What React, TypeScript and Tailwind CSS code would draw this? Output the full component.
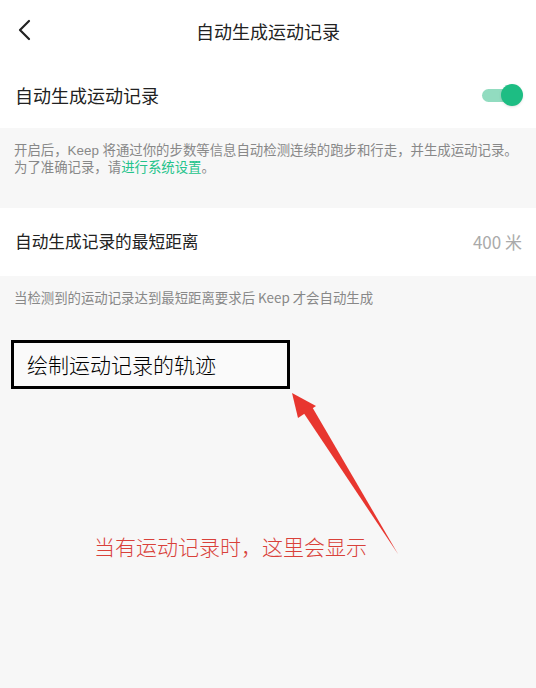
export default function App() {
  return (
    <main
      className="flex h-[688px] w-[536px] flex-col overflow-hidden bg-[#f7f7f7]"
      style={{ fontFamily: '"Noto Sans CJK SC", "Noto Sans", sans-serif' }}
    >
      {/* Header */}
      <header className="relative flex h-[62px] items-center justify-center bg-white">
        <svg
          className="absolute left-[17px] top-[19px]"
          width="16"
          height="22"
          viewBox="0 0 16 22"
          fill="none"
          stroke="#222"
          strokeWidth="2.2"
          strokeLinecap="round"
          strokeLinejoin="round"
        >
          <path d="M12 2 L3 11 L12 20" />
        </svg>
        <h1 className="text-[18px] text-[#222]">自动生成运动记录</h1>
      </header>

      {/* Toggle row */}
      <div className="flex h-[66px] items-center justify-between bg-white pl-[15px] pr-[13px]">
        <span className="text-[18px] text-[#222]">自动生成运动记录</span>
        <div className="relative h-[22px] w-[42px]">
          <div className="absolute left-[1px] top-[5px] h-[13px] w-[34px] rounded-full bg-[#92dcc0]" />
          <div className="absolute right-0 top-0 h-[22px] w-[22px] rounded-full bg-[#1dbd83] shadow-sm" />
        </div>
      </div>

      {/* Description */}
      <div
        className="px-[14px] pb-[32px] pt-[14px] text-[13.4px] leading-[17px] text-[#888]"
        style={{ fontFamily: '"Liberation Sans", "Noto Sans CJK SC", sans-serif' }}
      >
        <p className="whitespace-nowrap">开启后，Keep 将通过你的步数等信息自动检测连续的跑步和行走，并生成运动记录。</p>
        <p>
          为了准确记录，请<span className="text-[#24c38b]">进行系统设置</span>。
        </p>
      </div>

      {/* Distance row */}
      <div className="flex h-[68px] items-center justify-between bg-white pl-[15px] pr-[14px]">
        <span className="text-[16.7px] text-[#222]">自动生成记录的最短距离</span>
        <span className="text-[17px] text-[#aaa]">400 米</span>
      </div>

      <p className="whitespace-nowrap px-[14px] pt-[11px] text-[13.4px] text-[#888]">
        当检测到的运动记录达到最短距离要求后 Keep 才会自动生成
      </p>

      {/* Annotation */}
      <div className="relative flex-1">
        <div className="ml-[11px] mt-[33px] flex h-[49px] w-[279px] items-center border-[3px] border-black bg-[#fafafa] pl-[13px]">
          <span className="text-[21px] font-light text-black">绘制运动记录的轨迹</span>
        </div>

        <svg
          className="absolute left-0 top-0"
          width="536"
          height="400"
          viewBox="0 0 536 400"
        >
          <polygon points="292,86 316,99 298,111" fill="#e8362f" />
          <polygon points="301,102 311,98 398,247" fill="#e8362f" />
        </svg>

        <p className="absolute left-[94px] top-[224px] text-[21px] font-light text-[#d9413a]">
          当有运动记录时，这里会显示
        </p>
      </div>
    </main>
  );
}
